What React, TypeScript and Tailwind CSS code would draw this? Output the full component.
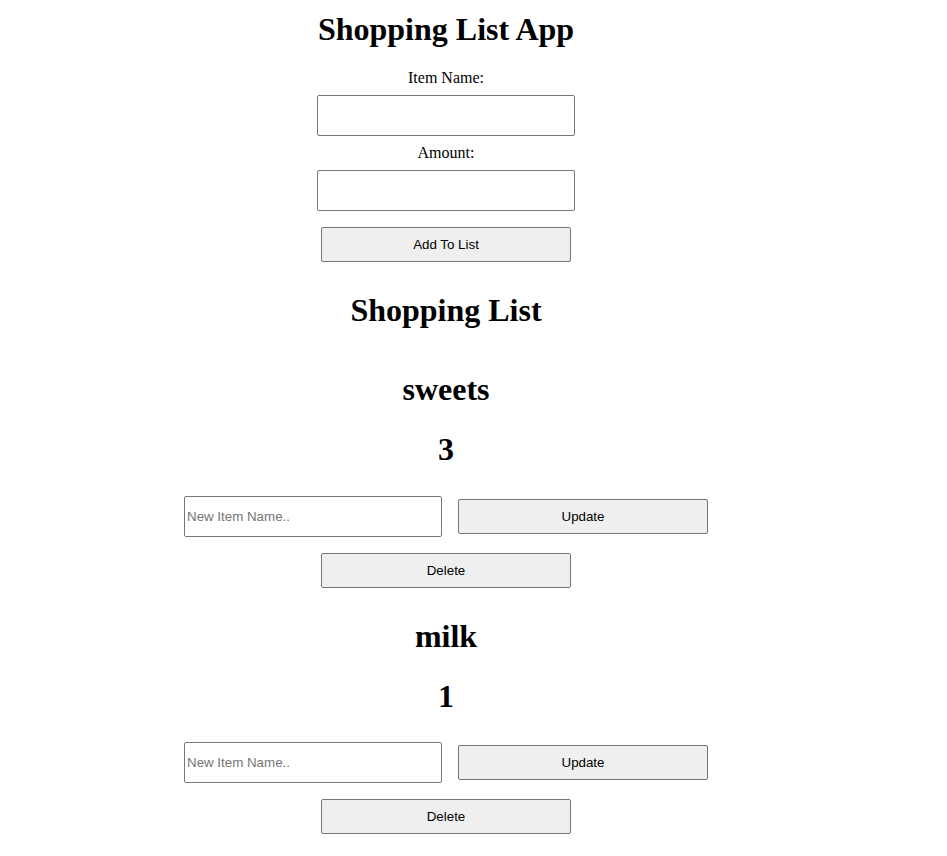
import React, { useState } from "react";

interface Item {
  name: string;
  amount: number;
}

const serif = "font-['Liberation_Serif','Times_New_Roman',serif]";
const sans = "font-['Liberation_Sans',Arial,sans-serif]";
const btn = `${sans} w-[250px] h-[35px] bg-[#efefef] border border-[#767676] rounded-[2px] text-[13.333px] text-black`;
const input = `${sans} w-[258px] h-[41px] bg-white border border-[#767676] rounded-[2px] px-[2px] text-[13.333px] placeholder:text-[#757575] outline-none`;

const ItemRow = ({ item, first }: { item: Item; first: boolean }) => {
  const [newName, setNewName] = useState("");
  return (
    <div className={first ? "mt-[42px]" : "mt-[30px]"}>
      <h1 className={`${serif} text-[32px] leading-[37px] font-bold`}>{item.name}</h1>
      <h1 className={`${serif} text-[32px] leading-[37px] font-bold mt-[23px]`}>{item.amount}</h1>
      {/* update row */}
      <div
        className={`flex items-center justify-center gap-4 ${first ? "mt-[28px]" : "mt-[27px]"}`}
      >
        <input
          value={newName}
          onChange={(e) => setNewName(e.target.value)}
          placeholder="New Item Name.."
          className={input}
        />
        <button className={btn}>Update</button>
      </div>
      <div className="flex justify-center mt-4">
        <button className={btn}>Delete</button>
      </div>
    </div>
  );
};

const App = () => {
  const [name, setName] = useState("");
  const [amount, setAmount] = useState("");
  const items: Item[] = [
    { name: "sweets", amount: 3 },
    { name: "milk", amount: 1 },
  ];

  return (
    <div className="w-[892px] min-h-[856px] bg-white text-black text-center pt-[11px]">
      <h1 className={`${serif} text-[32px] leading-[37px] font-bold`}>Shopping List App</h1>

      {/* add form */}
      <div className="flex flex-col items-center mt-[21px]">
        <label className={`${serif} text-[16px] leading-[18px]`}>Item Name:</label>
        <input value={name} onChange={(e) => setName(e.target.value)} className={`${input} mt-2`} />
        <label className={`${serif} text-[16px] leading-[18px] mt-[8px]`}>Amount:</label>
        <input value={amount} onChange={(e) => setAmount(e.target.value)} className={`${input} mt-2`} />
        <button className={`${btn} mt-4`}>Add To List</button>
      </div>

      <h1 className={`${serif} text-[32px] leading-[37px] font-bold mt-[30px]`}>Shopping List</h1>

      {items.map((item, i) => (
        <ItemRow key={item.name} item={item} first={i === 0} />
      ))}
    </div>
  );
};

export default App;
